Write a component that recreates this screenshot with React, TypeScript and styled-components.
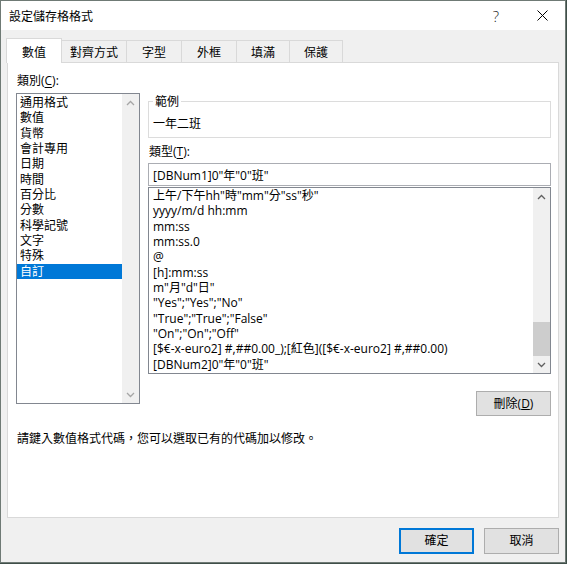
import React from 'react';
import styled, { createGlobalStyle } from 'styled-components';

const GlobalStyle = createGlobalStyle`
  body {
    margin: 0;
    background: #3f4f49;
    font-family: 'Open Sans', 'Noto Sans CJK TC', sans-serif;
    font-size: 12px;
    color: #000;
  }
`;

const categories = ['通用格式', '數值', '貨幣', '會計專用', '日期', '時間', '百分比', '分數', '科學記號', '文字', '特殊', '自訂'];

const formats = [
  '上午/下午hh"時"mm"分"ss"秒"',
  'yyyy/m/d hh:mm',
  'mm:ss',
  'mm:ss.0',
  '@',
  '[h]:mm:ss',
  'm"月"d"日"',
  '"Yes";"Yes";"No"',
  '"True";"True";"False"',
  '"On";"On";"Off"',
  '[$€-x-euro2] #,##0.00_);[紅色]([$€-x-euro2] #,##0.00)',
  '[DBNum2]0"年"0"班"',
];

const tabs = [
  { label: '數值', width: 56 },
  { label: '對齊方式', width: 66 },
  { label: '字型', width: 56 },
  { label: '外框', width: 56 },
  { label: '填滿', width: 54 },
  { label: '保護', width: 54 },
];

function Chevron({ up, disabled }: { up?: boolean; disabled?: boolean }) {
  return (
    <svg width="9" height="6" viewBox="0 0 9 6">
      <path
        d={up ? 'M1 5 L4.5 1.5 L8 5' : 'M1 1 L4.5 4.5 L8 1'}
        fill="none"
        stroke={disabled ? '#a6a6a6' : '#606060'}
        strokeWidth="1.3"
      />
    </svg>
  );
}

function App() {
  return (
    <>
      <GlobalStyle />
      <Window>
        <TitleBar>
          <TitleText>設定儲存格格式</TitleText>
          <CaptionButton>
            <HelpGlyph>?</HelpGlyph>
          </CaptionButton>
          <CaptionButton>
            <svg width="11" height="11" viewBox="0 0 11 11">
              <path d="M0.5 0.5 L10.5 10.5 M10.5 0.5 L0.5 10.5" stroke="#000" strokeWidth="1" />
            </svg>
          </CaptionButton>
        </TitleBar>

        <Body>
          <TabStrip>
            {tabs.map((t, i) => (
              <Tab key={t.label} $width={t.width} $selected={i === 0}>
                {t.label}
              </Tab>
            ))}
          </TabStrip>

          <Panel>
            <Columns>
              <LeftCol>
                <FieldLabel>
                  類別(<u>C</u>):
                </FieldLabel>
                <Listbox $height={311}>
                  <ListItems $pad={4}>
                    {categories.map((c, i) => (
                      <ListItem key={c} $selected={i === categories.length - 1} $pad={3}>
                        {c}
                      </ListItem>
                    ))}
                  </ListItems>
                  <ScrollBar>
                    <ScrollButton>
                      <Chevron up disabled />
                    </ScrollButton>
                    <Track />
                    <ScrollButton>
                      <Chevron disabled />
                    </ScrollButton>
                  </ScrollBar>
                </Listbox>
              </LeftCol>

              <RightCol>
                <Sample>
                  <Legend>範例</Legend>
                  <SampleText>一年二班</SampleText>
                </Sample>
                <FieldLabel $top={6}>
                  類型(<u>T</u>):
                </FieldLabel>
                <TextInput>[DBNum1]0"年"0"班"</TextInput>
                <Listbox $height={187} $top={1}>
                  <ListItems $pad={0}>
                    {formats.map((f) => (
                      <ListItem key={f} $pad={4}>
                        {f}
                      </ListItem>
                    ))}
                  </ListItems>
                  <ScrollBar>
                    <ScrollButton>
                      <Chevron up />
                    </ScrollButton>
                    <Track />
                    <Thumb />
                    <ScrollButton>
                      <Chevron />
                    </ScrollButton>
                  </ScrollBar>
                </Listbox>
                <ButtonRow>
                  <Button $small>
                    刪除(<u>D</u>)
                  </Button>
                </ButtonRow>
              </RightCol>
            </Columns>
            <HintText>請鍵入數值格式代碼，您可以選取已有的代碼加以修改。</HintText>
          </Panel>

          <Footer>
            <Button $primary>確定</Button>
            <Button>取消</Button>
          </Footer>
        </Body>
      </Window>
    </>
  );
}

export default App;

const Window = styled.div`
  width: 566px;
  height: 563px;
  box-sizing: border-box;
  border: 1px solid #6f7a75;
  background: #f0f0f0;
  display: flex;
  flex-direction: column;
`;

const TitleBar = styled.div`
  height: 29px;
  background: #fff;
  display: flex;
  align-items: center;
  padding-left: 8px;
`;

const TitleText = styled.div`
  flex: 1;
  font-family: 'Noto Sans CJK TC', sans-serif;
  font-size: 12px;
  line-height: 16px;
`;

const CaptionButton = styled.div`
  width: 46px;
  height: 29px;
  display: flex;
  align-items: center;
  justify-content: center;
`;

const HelpGlyph = styled.span`
  font-family: 'Open Sans', sans-serif;
  font-size: 15px;
  font-weight: 300;
  color: #222;
`;

const Body = styled.div`
  flex: 1;
  display: flex;
  flex-direction: column;
  padding: 8px 6px 8px 6px;
`;

const TabStrip = styled.div`
  height: 24px;
  display: flex;
  align-items: flex-end;
`;

const Tab = styled.div<{ $width: number; $selected?: boolean }>`
  position: relative;
  box-sizing: border-box;
  width: ${(p) => p.$width}px;
  height: ${(p) => (p.$selected ? 25 : 22)}px;
  margin-left: -1px;
  margin-bottom: ${(p) => (p.$selected ? -1 : 0)}px;
  z-index: ${(p) => (p.$selected ? 2 : 1)};
  border: 1px solid #d9d9d9;
  border-bottom: none;
  background: ${(p) => (p.$selected ? '#fff' : '#f0f0f0')};
  display: flex;
  align-items: center;
  justify-content: center;
  padding-top: ${(p) => (p.$selected ? 2 : 1)}px;
  font-family: 'Noto Sans CJK TC', sans-serif;
  line-height: 16px;
`;

const Panel = styled.div`
  height: 456px;
  box-sizing: border-box;
  border: 1px solid #d9d9d9;
  background: #fff;
  padding: 10px 7px 0 8px;
  display: flex;
  flex-direction: column;
`;

const Columns = styled.div`
  display: grid;
  grid-template-columns: 124px 403px;
  column-gap: 8px;
  align-items: start;
`;

const LeftCol = styled.div`
  display: flex;
  flex-direction: column;
`;

const RightCol = styled.div`
  display: flex;
  flex-direction: column;
  padding-top: 20px;
`;

const FieldLabel = styled.div<{ $top?: number }>`
  line-height: 16px;
  margin-top: ${(p) => p.$top ?? 0}px;
  margin-bottom: ${(p) => (p.$top ? 3 : 4)}px;
  padding-left: 1px;
  u {
    text-underline-offset: 2px;
  }
`;

const Listbox = styled.div<{ $height: number; $top?: number }>`
  height: ${(p) => p.$height}px;
  margin-top: ${(p) => p.$top ?? 0}px;
  box-sizing: border-box;
  border: 1px solid #828790;
  display: flex;
  overflow: hidden;
`;

const ListItems = styled.div<{ $pad: number }>`
  flex: 1;
  padding-top: ${(p) => (p.$pad ? 1 : 0)}px;
  overflow: hidden;
`;

const ListItem = styled.div<{ $selected?: boolean; $pad: number }>`
  height: 15.35px;
  line-height: 15.35px;
  padding-left: ${(p) => p.$pad}px;
  white-space: nowrap;
  background: ${(p) => (p.$selected ? '#0078d7' : 'transparent')};
  color: ${(p) => (p.$selected ? '#fff' : '#000')};
`;

const ScrollBar = styled.div`
  width: 17px;
  background: #f0f0f0;
  display: flex;
  flex-direction: column;
`;

const ScrollButton = styled.div`
  height: 17px;
  display: flex;
  align-items: center;
  justify-content: center;
`;

const Track = styled.div`
  flex: 1;
`;

const Thumb = styled.div`
  height: 34px;
  background: #cdcdcd;
`;

const Sample = styled.fieldset`
  margin: 0;
  padding: 0 4px 6px 4px;
  border: 1px solid #dcdcdc;
  min-width: 0;
`;

const Legend = styled.legend`
  padding: 0 2px;
  line-height: 16px;
  font-family: 'Noto Sans CJK TC', sans-serif;
`;

const SampleText = styled.div`
  margin-top: 6px;
  line-height: 16px;
  font-family: 'Noto Sans CJK TC', sans-serif;
`;

const TextInput = styled.div`
  height: 23px;
  box-sizing: border-box;
  border: 1px solid #abadb3;
  padding-left: 4px;
  display: flex;
  align-items: center;
  white-space: nowrap;
`;

const ButtonRow = styled.div`
  display: flex;
  justify-content: flex-end;
  margin-top: 17px;
`;

const Button = styled.div<{ $primary?: boolean; $small?: boolean }>`
  width: 75px;
  height: ${(p) => (p.$small ? 25 : 26)}px;
  box-sizing: border-box;
  border: ${(p) => (p.$primary ? '2px solid #0078d7' : '1px solid #adadad')};
  background: #e1e1e1;
  display: flex;
  align-items: center;
  justify-content: center;
  line-height: 16px;
`;

const HintText = styled.div`
  margin-top: 14px;
  padding-left: 1px;
  line-height: 16px;
  font-family: 'Noto Sans CJK TC', sans-serif;
`;

const Footer = styled.div`
  display: flex;
  justify-content: flex-end;
  gap: 10px;
  margin-top: 10px;
`;
